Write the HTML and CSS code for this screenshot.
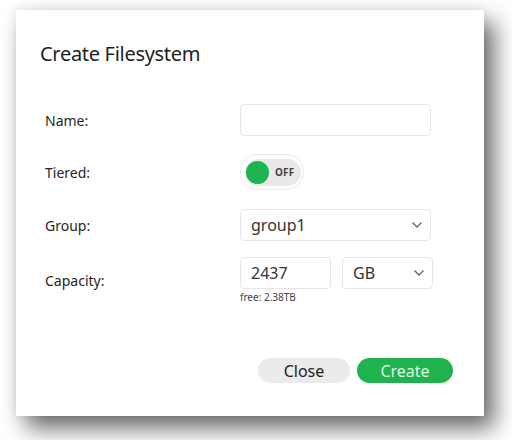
FILE: index.html
```html
<!DOCTYPE html>
<html>
<head>
<meta charset="utf-8">
<link rel="stylesheet" href="styles.css">
</head>
<body>
<div class="dialog">
  <h1 class="title">Create Filesystem</h1>
  <div class="form">
    <div class="row row-name">
      <label class="label">Name:</label>
      <div class="input wide"></div>
    </div>
    <div class="row row-tiered">
      <label class="label">Tiered:</label>
      <div class="toggle"><div class="track"><span class="knob"></span><span class="off">OFF</span></div></div>
    </div>
    <div class="row row-group">
      <label class="label">Group:</label>
      <div class="input wide select"><span class="val">group1</span><svg class="chev" width="12" height="8" viewBox="0 0 12 8"><path d="M1.5 1.5 L6 6 L10.5 1.5" fill="none" stroke="#666" stroke-width="1.3"/></svg></div>
    </div>
    <div class="row row-cap">
      <label class="label">Capacity:</label>
      <div class="capwrap">
        <div class="caprow">
          <div class="input small"><span class="val">2437</span></div>
          <div class="input small select"><span class="val">GB</span><svg class="chev" width="12" height="8" viewBox="0 0 12 8"><path d="M1.5 1.5 L6 6 L10.5 1.5" fill="none" stroke="#666" stroke-width="1.3"/></svg></div>
        </div>
        <div class="free">free: 2.38TB</div>
      </div>
    </div>
  </div>
  <div class="actions">
    <button class="btn close">Close</button>
    <button class="btn create">Create</button>
  </div>
</div>
</body>
</html>
```
FILE: styles.css
```css
html, body { margin: 0; padding: 0; background: #fff; }
body {
  width: 512px; height: 440px; overflow: hidden;
  font-family: "Noto Sans", "Open Sans", sans-serif;
  color: #2a2a2a;
  padding: 10px 0 0 16px;
  box-sizing: border-box;
}
.dialog {
  width: 468px; height: 406px;
  background: #fff;
  box-shadow: 10px 12px 22px rgba(0,0,0,0.6), -2px -2px 10px rgba(0,0,0,0.06);
  box-sizing: border-box;
  padding: 30px 0 0 24px;
  position: relative;
}
.title {
  margin: 0; font-weight: 400; font-size: 20px; line-height: 28px;
  color: #1e1e1e; letter-spacing: -0.3px;
}
.form { margin-top: 36px; display: flex; flex-direction: column; }
.row { display: flex; align-items: center; }
.label { width: 200px; box-sizing: border-box; padding-left: 5px; font-size: 14px; color: #262626; }
.input {
  border: 1px solid #e6e6e6; border-radius: 4px; height: 32px; box-sizing: border-box;
  display: flex; align-items: center; background: #fff;
}
.wide { width: 191px; }
.row-tiered { margin-top: 18px; }
.row-group { margin-top: 19px; }
.row-cap { margin-top: 16px; align-items: flex-start; }
.row-cap .label { margin-top: 14px; }
.toggle {
  width: 64px; height: 36px; border: 1px solid #e8e8e8; border-radius: 18px;
  box-sizing: border-box; display: flex; align-items: center; padding-left: 4px;
}
.track {
  width: 56px; height: 27px; border-radius: 14px; background: #e9e9e9;
  display: flex; align-items: center;
}
.knob { width: 23px; height: 23px; border-radius: 50%; background: #1eb551; margin-left: 1px; }
.off { font-size: 10px; font-weight: 700; color: #444; margin-left: 6px; letter-spacing: 0.2px; }
.val { font-size: 16px; color: #333; padding-left: 10px; }
.select { justify-content: space-between; }
.select .chev { margin-right: 7px; }
.caprow { display: flex; gap: 11px; }
.small { width: 91px; }
.free { font-size: 10px; color: #444; margin-top: 1px; }
.actions {
  position: absolute; left: 242px; top: 348px; display: flex; gap: 7px;
}
.btn {
  border: none; border-radius: 13px; height: 25px; font-family: inherit; font-size: 16px;
  padding: 0; display: flex; align-items: center; justify-content: center;
}
.close { width: 92px; background: #ebebeb; color: #222; }
.create { width: 96px; background: #1fb34f; color: #dff7e4; }
```
